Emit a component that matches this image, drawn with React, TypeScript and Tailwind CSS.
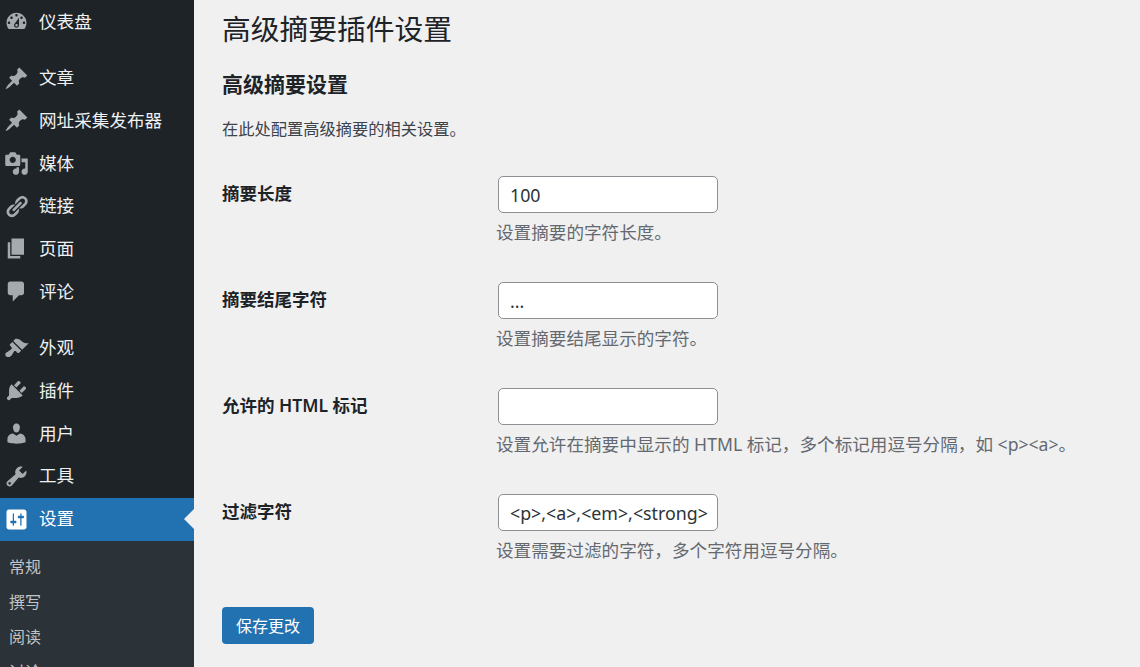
const font = "font-['Noto_Sans','Noto_Sans_CJK_SC',sans-serif]"

const icons = {
    dashboard: "M3.76 16h12.48c1.1-1.37 1.76-3.11 1.76-5 0-4.42-3.58-8-8-8s-8 3.58-8 8c0 1.89.66 3.63 1.76 5zM10 4c.55 0 1 .45 1 1s-.45 1-1 1-1-.45-1-1 .45-1 1-1zM6 6c.55 0 1 .45 1 1s-.45 1-1 1-1-.45-1-1 .45-1 1-1zm8 0c.55 0 1 .45 1 1s-.45 1-1 1-1-.45-1-1 .45-1 1-1zm-5.37 5.55L12 7v6c0 1.1-.9 2-2 2s-2-.9-2-2c0-.57.24-1.08.63-1.45zM4 10c.55 0 1 .45 1 1s-.45 1-1 1-1-.45-1-1 .45-1 1-1zm12 0c.55 0 1 .45 1 1s-.45 1-1 1-1-.45-1-1 .45-1 1-1zm-5 3c0-.55-.45-1-1-1s-1 .45-1 1 .45 1 1 1 1-.45 1-1z",
    post: "M10.44 3.02l1.82-1.82 6.36 6.35-1.83 1.82c-1.05-.68-2.48-.57-3.41.36l-.75.75c-.92.93-1.04 2.35-.35 3.41l-1.83 1.82-2.41-2.41-2.8 2.79c-.42.42-3.38 2.71-3.8 2.29s1.86-3.39 2.28-3.81l2.79-2.79L4.1 9.36l1.83-1.82c1.05.69 2.48.57 3.4-.36l.75-.75c.93-.92 1.05-2.35.36-3.41z",
    media: "M13 11V4c0-.55-.45-1-1-1h-1.67L9 1H5L3.67 3H2c-.55 0-1 .45-1 1v7c0 .55.45 1 1 1h10c.55 0 1-.45 1-1zM7 4.5c1.38 0 2.5 1.12 2.5 2.5S8.38 9.5 7 9.5 4.5 8.38 4.5 7 5.62 4.5 7 4.5zM14 6h5v10.5c0 1.38-1.12 2.5-2.5 2.5S14 17.88 14 16.5s1.12-2.5 2.5-2.5c.17 0 .34.02.5.05V9h-3V6zm-4 8.05V13h2v3.5c0 1.38-1.12 2.5-2.5 2.5S7 17.88 7 16.5 8.12 14 9.5 14c.17 0 .34.02.5.05z",
    links: "M17.74 2.76c1.68 1.69 1.68 4.41 0 6.1l-1.53 1.52c-1.12 1.12-2.7 1.47-4.14 1.09l2.62-2.61.76-.77.76-.76c.84-.84.84-2.2 0-3.04-.84-.85-2.2-.85-3.04 0l-.77.76-3.38 3.38c-.37-1.44-.02-3.02 1.1-4.14l1.52-1.53c1.69-1.68 4.42-1.68 6.1 0zM8.59 13.43l5.34-5.34c.42-.42.42-1.1 0-1.52-.44-.43-1.13-.39-1.53 0l-5.33 5.34c-.42.42-.42 1.1 0 1.52.44.43 1.13.39 1.52 0zm-.76 2.29l4.14-4.15c.38 1.44.03 3.02-1.09 4.14l-1.52 1.53c-1.69 1.68-4.41 1.68-6.1 0-1.68-1.68-1.68-4.42 0-6.1l1.53-1.52c1.12-1.12 2.7-1.47 4.14-1.1l-4.14 4.15c-.85.84-.85 2.2 0 3.05.84.84 2.2.84 3.04 0z",
    page: "M6 15V2h10v13H6zm-1 1h8v2H3V5h2v11z",
    comments: "M5 2h9c1.1 0 2 .9 2 2v7c0 1.1-.9 2-2 2h-2l-5 5v-5H5c-1.1 0-2-.9-2-2V4c0-1.1.9-2 2-2z",
    appearance: "M14.48 11.06L7.41 3.99l1.5-1.5c.5-.56 2.3-.47 3.51.32 1.21.8 1.43 1.28 2.91 2.1 1.18.64 2.45 1.26 4.45.85zm-.71.71L6.7 4.7 4.93 6.47c-.39.39-.39 1.02 0 1.41l1.06 1.06c.39.39.39 1.03 0 1.42-.6.6-1.43 1.11-2.21 1.69-.35.26-.7.53-1.01.84C1.43 13.23.66 14.37 1.2 15.5c.5 1.05 1.86 1.54 3.1 1.2.96-.26 1.82-1.1 2.32-1.9.55-.88.94-1.83 1.52-2.55.38-.39 1.02-.39 1.41 0l1.06 1.06c.39.39 1.02.39 1.41 0z",
    plugins: "M13.11 4.36L9.87 7.6 8 5.73l3.24-3.24c.35-.34 1.05-.2 1.56.32.52.51.66 1.21.31 1.55zm-8 1.77l.91-1.12 9.01 9.01-1.19.84c-.71.71-2.63 1.16-3.82 1.16H6.14L4.9 17.26c-.59.59-1.54.59-2.12 0-.59-.58-.59-1.53 0-2.12l1.24-1.24v-3.88c0-1.13.4-3.19 1.09-3.89zm7.26 3.97l3.24-3.24c.34-.35 1.04-.21 1.55.31.52.51.66 1.21.31 1.55l-3.24 3.25z",
    users: "M10 9.25c-2.27 0-2.73-3.44-2.73-3.44C7 4.02 7.82 2 9.97 2c2.16 0 2.98 2.02 2.71 3.81 0 0-.41 3.44-2.68 3.44zm0 2.57L12.72 10c2.39 0 4.52 2.33 4.52 4.53v2.49s-3.65 1.13-7.24 1.13c-3.65 0-7.24-1.13-7.24-1.13v-2.49c0-2.25 1.94-4.48 4.47-4.48z",
    tools: "M16.68 9.77c-1.34 1.34-3.3 1.67-4.95.99l-5.41 6.52c-.99.99-2.59.99-3.58 0s-.99-2.59 0-3.57l6.52-5.42c-.68-1.65-.35-3.61.99-4.95 1.28-1.28 3.12-1.62 4.72-1.06l-2.89 2.89 2.82 2.82 2.86-2.87c.53 1.58.18 3.39-1.08 4.65zM3.81 16.21c.4.39 1.04.39 1.43 0 .4-.4.4-1.04 0-1.43-.39-.4-1.03-.4-1.43 0-.39.39-.39 1.03 0 1.43z",
    settings: "M18 16V4c0-1.1-.9-2-2-2H4c-1.1 0-2 .9-2 2v12c0 1.1.9 2 2 2h12c1.1 0 2-.9 2-2zM8 11h1c.55 0 1 .45 1 1s-.45 1-1 1H8v1.5c0 .28-.22.5-.5.5s-.5-.22-.5-.5V13H6c-.55 0-1-.45-1-1s.45-1 1-1h1V5.5c0-.28.22-.5.5-.5s.5.22.5.5V11zm5-2h-1c-.55 0-1-.45-1-1s.45-1 1-1h1V5.5c0-.28.22-.5.5-.5s.5.22.5.5V7h1c.55 0 1 .45 1 1s-.45 1-1 1h-1v5.5c0 .28-.22.5-.5.5s-.5-.22-.5-.5V9z",
}

type IconName = keyof typeof icons

function MenuItem({ icon, label, active = false }: { icon: IconName; label: string; active?: boolean }) {
    return (
        <div className={`relative flex items-center pl-[4px] ${active ? "h-[43px] bg-[#2271b1] text-white" : "h-[42.7px] text-[#f0f0f1]"}`}>
            <svg viewBox="0 0 20 20" className={`h-[25px] w-[25px] shrink-0 ${active ? "fill-white" : "fill-[#a7aaad]"}`}>
                <path d={icons[icon]} />
            </svg>
            <span className="ml-[10px] text-[17.6px] leading-none">{label}</span>
            {active && (
                <span className="absolute right-0 top-1/2 h-0 w-0 -translate-y-1/2 border-y-[10px] border-r-[10px] border-y-transparent border-r-[#f0f0f1]" />
            )}
        </div>
    )
}

function Field({ label, value, help }: { label: string; value: string; help: string }) {
    return (
        <div className="flex h-[106px]">
            <div className="w-[276px] pt-[5px] text-[17.5px] font-semibold leading-[24px] text-[#1d2327]">{label}</div>
            <div>
                <input
                    readOnly
                    value={value}
                    className="block h-[37px] w-[220px] rounded-[5px] border border-[#8c8f94] bg-white pl-[11px] pr-[4px] text-[17.8px] text-[#2c3338] outline-none"
                />
                <p className="mt-[6.5px] -ml-[2px] whitespace-nowrap text-[17.6px] leading-[24px] text-[#646970]">{help}</p>
            </div>
        </div>
    )
}

export default function App() {
    return (
        <div className={`flex h-[667px] w-[1140px] overflow-hidden bg-[#f0f0f1] ${font}`}>
            <aside className="w-[194px] shrink-0 bg-[#1d2327]">
                <MenuItem icon="dashboard" label="仪表盘" />
                <div className="h-[14px]" />
                <MenuItem icon="post" label="文章" />
                <MenuItem icon="post" label="网址采集发布器" />
                <MenuItem icon="media" label="媒体" />
                <MenuItem icon="links" label="链接" />
                <MenuItem icon="page" label="页面" />
                <MenuItem icon="comments" label="评论" />
                <div className="h-[14px]" />
                <MenuItem icon="appearance" label="外观" />
                <MenuItem icon="plugins" label="插件" />
                <MenuItem icon="users" label="用户" />
                <MenuItem icon="tools" label="工具" />
                <MenuItem icon="settings" label="设置" active />
                <div className="h-[200px] bg-[#2c3338] pt-[9px] pl-[9px] text-[16px] text-[#c3c4c7]">
                    <div className="flex h-[35px] items-center">常规</div>
                    <div className="flex h-[35px] items-center">撰写</div>
                    <div className="flex h-[35px] items-center">阅读</div>
                    <div className="flex h-[35px] items-center">讨论</div>
                </div>
            </aside>
            <main className="min-w-0 flex-1 pl-[28px]">
                <h1 className="mt-[11px] text-[28.75px] font-normal leading-[36px] text-[#1d2327]">高级摘要插件设置</h1>
                <h2 className="mt-[23px] text-[21px] font-semibold leading-[28px] text-[#1d2327]">高级摘要设置</h2>
                <p className="mt-[19px] text-[16.25px] leading-[24px] text-[#3c434a]">在此处配置高级摘要的相关设置。</p>
                <div className="mt-[35px]">
                    <Field label="摘要长度" value="100" help="设置摘要的字符长度。" />
                    <Field label="摘要结尾字符" value="..." help="设置摘要结尾显示的字符。" />
                    <Field label="允许的 HTML 标记" value="" help="设置允许在摘要中显示的 HTML 标记，多个标记用逗号分隔，如 <p><a>。" />
                    <Field label="过滤字符" value="<p>,<a>,<em>,<strong>" help="设置需要过滤的字符，多个字符用逗号分隔。" />
                </div>
                <button className="mt-[7px] h-[37px] w-[92px] rounded-[4px] bg-[#2271b1] text-[16px] text-white">保存更改</button>
            </main>
        </div>
    )
}
